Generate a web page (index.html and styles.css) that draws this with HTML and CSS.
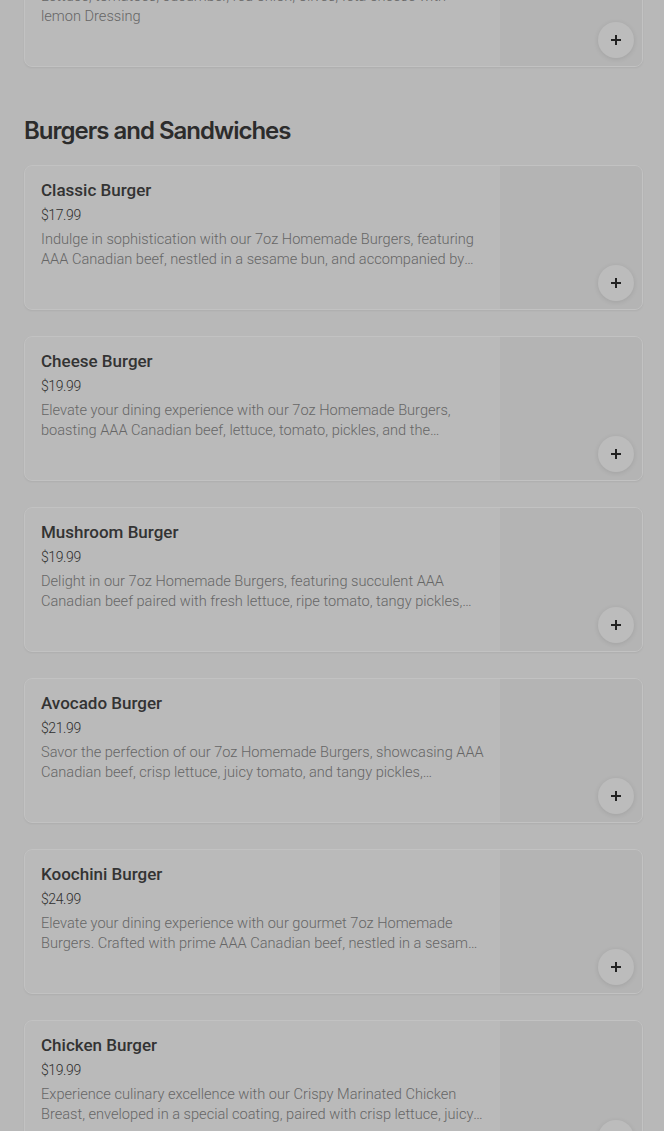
FILE: index.html
```html
<!DOCTYPE html>
<html lang="en">
<head>
  <meta charset="UTF-8">
  <meta name="viewport" content="width=device-width, initial-scale=1.0">
  <title>Menu</title>
  <link rel="stylesheet" href="styles.css">
</head>
<body>
  <div class="menu">
    <div class="item">
      <div class="info">
        <h3 class="name">Greek Salad</h3>
        <div class="price">$15.99</div>
        <p class="desc">Lettuce, tomatoes, cucumber, red onion, olives, feta cheese with lemon Dressing</p>
      </div>
      <div class="thumb"></div>
      <button class="add" aria-label="Add">
        <svg viewBox="0 0 12 12" width="12" height="12"><path d="M6 1v10M1 6h10" stroke="currentColor" stroke-width="2"/></svg>
      </button>
    </div>

    <h2 class="section-title">Burgers and Sandwiches</h2>

    <div class="list">
      <div class="item">
        <div class="info">
          <h3 class="name">Classic Burger</h3>
          <div class="price">$17.99</div>
          <p class="desc">Indulge in sophistication with our 7oz Homemade Burgers, featuring AAA Canadian beef, nestled in a sesame bun, and accompanied by crisp lettuce, ripe tomato and pickles.</p>
        </div>
        <div class="thumb"></div>
        <button class="add" aria-label="Add">
          <svg viewBox="0 0 12 12" width="12" height="12"><path d="M6 1v10M1 6h10" stroke="currentColor" stroke-width="2"/></svg>
        </button>
      </div>

      <div class="item">
        <div class="info">
          <h3 class="name">Cheese Burger</h3>
          <div class="price">$19.99</div>
          <p class="desc">Elevate your dining experience with our 7oz Homemade Burgers, boasting AAA Canadian beef, lettuce, tomato, pickles, and the delicious melted cheddar cheese.</p>
        </div>
        <div class="thumb"></div>
        <button class="add" aria-label="Add">
          <svg viewBox="0 0 12 12" width="12" height="12"><path d="M6 1v10M1 6h10" stroke="currentColor" stroke-width="2"/></svg>
        </button>
      </div>

      <div class="item">
        <div class="info">
          <h3 class="name">Mushroom Burger</h3>
          <div class="price">$19.99</div>
          <p class="desc">Delight in our 7oz Homemade Burgers, featuring succulent AAA Canadian beef paired with fresh lettuce, ripe tomato, tangy pickles, and sautéed mushrooms.</p>
        </div>
        <div class="thumb"></div>
        <button class="add" aria-label="Add">
          <svg viewBox="0 0 12 12" width="12" height="12"><path d="M6 1v10M1 6h10" stroke="currentColor" stroke-width="2"/></svg>
        </button>
      </div>

      <div class="item">
        <div class="info">
          <h3 class="name">Avocado Burger</h3>
          <div class="price">$21.99</div>
          <p class="desc">Savor the perfection of our 7oz Homemade Burgers, showcasing AAA Canadian beef, crisp lettuce, juicy tomato, and tangy pickles, complemented by creamy avocado.</p>
        </div>
        <div class="thumb"></div>
        <button class="add" aria-label="Add">
          <svg viewBox="0 0 12 12" width="12" height="12"><path d="M6 1v10M1 6h10" stroke="currentColor" stroke-width="2"/></svg>
        </button>
      </div>

      <div class="item">
        <div class="info">
          <h3 class="name">Koochini Burger</h3>
          <div class="price">$24.99</div>
          <p class="desc">Elevate your dining experience with our gourmet 7oz Homemade Burgers. Crafted with prime AAA Canadian beef, nestled in a sesame bun with grilled zucchini.</p>
        </div>
        <div class="thumb"></div>
        <button class="add" aria-label="Add">
          <svg viewBox="0 0 12 12" width="12" height="12"><path d="M6 1v10M1 6h10" stroke="currentColor" stroke-width="2"/></svg>
        </button>
      </div>

      <div class="item">
        <div class="info">
          <h3 class="name">Chicken Burger</h3>
          <div class="price">$19.99</div>
          <p class="desc">Experience culinary excellence with our Crispy Marinated Chicken Breast, enveloped in a special coating, paired with crisp lettuce, juicy tomato and pickles.</p>
        </div>
        <div class="thumb"></div>
        <button class="add" aria-label="Add">
          <svg viewBox="0 0 12 12" width="12" height="12"><path d="M6 1v10M1 6h10" stroke="currentColor" stroke-width="2"/></svg>
        </button>
      </div>
    </div>
  </div>
</body>
</html>
```

FILE: styles.css
```css
* {
  margin: 0;
  padding: 0;
  box-sizing: border-box;
}

body {
  background: #b8b8b8;
  font-family: Roboto, "Liberation Sans", sans-serif;
  color: #2a2a2a;
  overflow: hidden;
}

/* page is scrolled: first card is partly above the fold */
.menu {
  margin-top: -78px;
  padding: 0 21px 0 24px;
}

.list {
  display: flex;
  flex-direction: column;
  gap: 26px;
}

.item {
  position: relative;
  display: flex;
  height: 145px;
  background: #bababa;
  border: 1px solid #c2c2c2;
  border-radius: 8px;
  box-shadow: 0 1px 2px rgba(0, 0, 0, 0.06);
  overflow: hidden;
}

.info {
  flex: 1;
  min-width: 0;
  padding: 15px 16px 0 16px;
}

.name {
  font-size: 17px;
  font-weight: 500;
  line-height: 18px;
  color: #333;
}

.price {
  margin-top: 7px;
  font-size: 14px;
  font-weight: 300;
  line-height: 18px;
  letter-spacing: -0.4px;
  color: #2e2e2e;
}

.desc {
  margin-top: 5px;
  font-size: 14.6px;
  font-weight: 300;
  line-height: 20px;
  color: #666;
  display: -webkit-box;
  -webkit-line-clamp: 2;
  -webkit-box-orient: vertical;
  overflow: hidden;
}

.thumb {
  width: 142px;
  flex-shrink: 0;
  background: #b4b4b4;
}

.add {
  position: absolute;
  right: 8px;
  bottom: 8px;
  width: 36px;
  height: 36px;
  border: none;
  border-radius: 50%;
  background: #bcbcbc;
  color: #222;
  box-shadow: 0 1px 5px rgba(0, 0, 0, 0.1);
  display: flex;
  align-items: center;
  justify-content: center;
}

.section-title {
  margin: 48px 0 18px;
  font-family: Inter, "Noto Sans", sans-serif;
  font-size: 24px;
  font-weight: 600;
  line-height: 32px;
  letter-spacing: -1px;
  color: #2c2c2c;
}
```
